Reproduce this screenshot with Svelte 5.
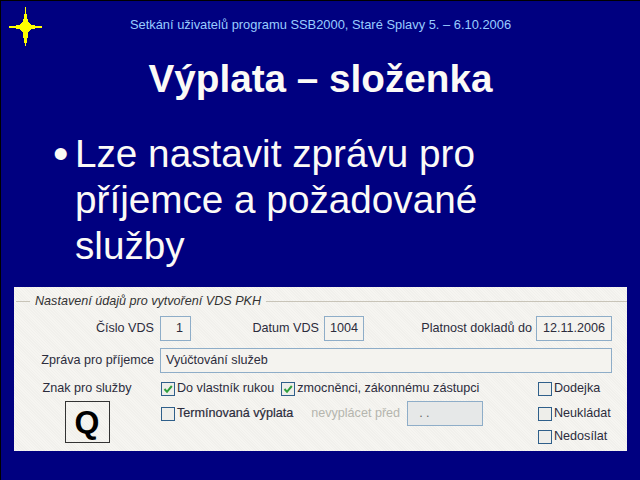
<script>
  const row1 = [
    { label: 'Číslo VDS', labelWidth: 146, pad: 6, value: '1', width: 31, align: 'right' },
    { label: 'Datum VDS', labelWidth: 133, pad: 5, value: '1004', width: 40, align: 'center' },
    { label: 'Platnost dokladů do', labelWidth: 172, pad: 4, value: '12.11.2006', width: 76, align: 'center' }
  ];
</script>

{#snippet tick(on)}
  <svg class="box" width="14" height="14" viewBox="0 0 14 14">
    <rect x="0.5" y="0.5" width="13" height="13" fill="#eeeeea" stroke="#2f5f8a" />
    {#if on}
      <path d="M3.5 7 L6 9.8 L10.8 4" fill="none" stroke="#2f9e3c" stroke-width="2" />
    {/if}
  </svg>
{/snippet}

<main class="slide">
  <svg class="star" width="42" height="42" viewBox="0 0 42 42">
    <polygon
      fill="#ffff00"
      points="20.5,0 22,10 23.5,15 26,17.5 30,18.5 40,20 30,21.5 26,22.5 23.5,25 22.5,31 21,39 20,39 18.5,31 17.5,25 15,22.5 11,21.5 0,20 11,18.5 15,17.5 17.5,15 19,10"
    />
  </svg>

  <header class="meeting">Setkání uživatelů programu SSB2000, Staré Splavy 5. – 6.10.2006</header>
  <h1>Výplata – složenka</h1>

  <div class="bullet">
    <span class="dot">•</span>
    <p>Lze nastavit zprávu pro příjemce a požadované služby</p>
  </div>

  <section class="panel">
    <div class="legend">
      <span class="rule short"></span>
      <em>Nastavení údajů pro vytvoření VDS PKH</em>
      <span class="rule"></span>
    </div>

    <div class="row first">
      {#each row1 as f}
        <span class="lbl" style="width: {f.labelWidth}px; padding-right: {f.pad}px">{f.label}</span>
        <div class="field {f.align}" style="width: {f.width}px">{f.value}</div>
      {/each}
    </div>

    <div class="row second">
      <span class="lbl" style="width: 146px; padding-right: 6px">Zpráva pro příjemce</span>
      <div class="field wide">Vyúčtování služeb</div>
    </div>

    <div class="services">
      <div class="sign">
        <span>Znak pro služby</span>
        <div class="q">Q</div>
      </div>

      <div class="options">
        <div class="line">
          <span class="check">{@render tick(true)}Do vlastník rukou</span>
          <span class="check">{@render tick(true)}zmocněnci, zákonnému zástupci</span>
        </div>
        <div class="line">
          <span class="check">{@render tick(false)}<b>Termínovaná výplata</b></span>
          <span class="muted">nevyplácet před</span>
          <div class="field date">. .</div>
        </div>
      </div>

      <div class="extra">
        <span class="check">{@render tick(false)}Dodejka</span>
        <span class="check">{@render tick(false)}Neukládat</span>
        <span class="check">{@render tick(false)}Nedosílat</span>
      </div>
    </div>
  </section>
</main>

<style>
  :global(body) {
    margin: 0;
    background: #000080;
  }

  .slide {
    position: relative;
    box-sizing: border-box;
    width: 640px;
    height: 480px;
    overflow: hidden;
    background: #000080;
    border-top: 1px solid #000;
    border-left: 1px solid #000;
    font-family: "Liberation Sans", Arial, sans-serif;
  }

  .star {
    position: absolute;
    left: 4px;
    top: 6px;
    shape-rendering: crispEdges;
  }

  .meeting {
    padding-top: 16px;
    height: 31px;
    text-align: center;
    font-size: 12.9px;
    line-height: 15px;
    color: #99ccff;
  }

  h1 {
    margin: 9px 0 0;
    text-align: center;
    font-size: 38.7px;
    line-height: 44px;
    font-weight: bold;
    color: #fbfaf6;
  }

  .bullet {
    display: flex;
    margin: 30px 0 0 52px;
    height: 156px;
    color: #fbfaf6;
    font-size: 38.7px;
    line-height: 46px;
  }

  .dot {
    width: 22px;
    flex: none;
    font-size: 44px;
  }

  .bullet p {
    margin: 0;
    width: 430px;
  }

  .panel {
    box-sizing: border-box;
    margin-left: 13px;
    width: 613px;
    height: 164px;
    background: repeating-linear-gradient(45deg, #f6f5f1 0 1px, #f1f0ec 1px 2px);
    color: #2c2c3c;
    font-size: 12.6px;
    line-height: 15px;
  }

  .legend {
    display: flex;
    align-items: center;
    gap: 5px;
    height: 15px;
    padding: 7px 0 0 2px;
    color: #333;
  }

  .rule {
    flex: 1;
    height: 1px;
    background: #c8c4b8;
  }

  .rule.short {
    flex: none;
    width: 14px;
  }

  .row {
    display: flex;
    align-items: center;
  }

  .first {
    margin-top: 7px;
  }

  .second {
    margin-top: 7px;
  }

  .lbl {
    box-sizing: border-box;
    flex: none;
    text-align: right;
    white-space: nowrap;
  }

  .field {
    box-sizing: border-box;
    flex: none;
    height: 25px;
    line-height: 23px;
    border: 1px solid #8eadc8;
    padding: 0 5px;
    background: #f4f3ef;
  }

  .right {
    text-align: right;
    padding-right: 7px;
  }

  .center {
    text-align: center;
    padding: 0;
  }

  .wide {
    width: 452px;
  }

  .services {
    display: flex;
    margin-top: 8px;
  }

  .sign {
    width: 146px;
    flex: none;
    display: flex;
    flex-direction: column;
    align-items: center;
  }

  .q {
    box-sizing: border-box;
    width: 45px;
    height: 42px;
    margin-top: 5px;
    border: 1px solid #333;
    text-align: center;
    font-size: 32px;
    line-height: 40px;
    font-weight: bold;
    color: #000;
  }

  .options {
    width: 378px;
    flex: none;
    padding-left: 1px;
    box-sizing: border-box;
  }

  .line {
    display: flex;
    align-items: center;
    height: 15px;
    gap: 7px;
    margin-bottom: 10px;
  }

  .check {
    display: flex;
    align-items: center;
    gap: 2px;
    height: 15px;
    white-space: nowrap;
  }

  .check b {
    font-weight: normal;
    -webkit-text-stroke: 0.2px #2c2c3c;
  }

  .box {
    flex: none;
  }

  .muted {
    margin-left: 11px;
    color: #b5b5ae;
  }

  .date {
    width: 76px;
    background: #e6e8e8;
    color: #666;
    text-align: left;
    padding-left: 11px;
  }

  .extra {
    display: flex;
    flex-direction: column;
    gap: 8px;
  }

  .extra .check:first-child {
    margin-bottom: 2px;
  }
</style>
